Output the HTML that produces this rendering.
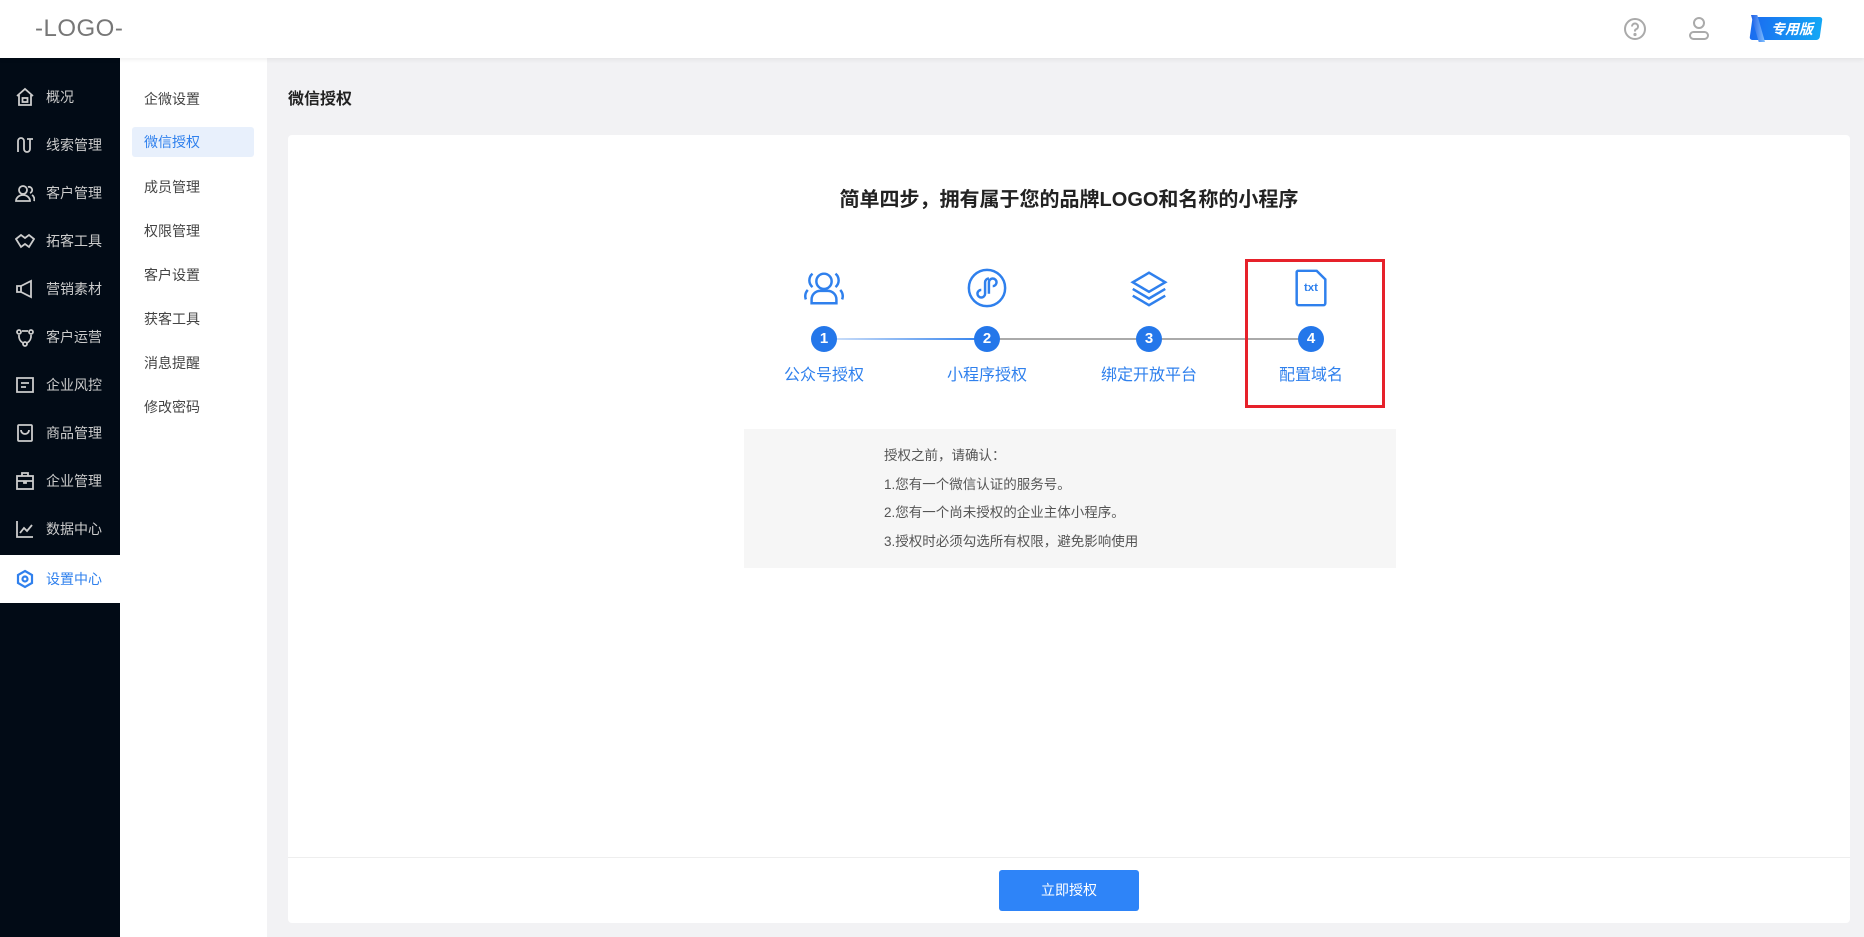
<!DOCTYPE html>
<html><head><meta charset="utf-8">
<style>
*{margin:0;padding:0;box-sizing:border-box}
body{width:1864px;height:937px;overflow:hidden;background:#f2f2f4;font-family:"Liberation Sans","Noto Sans CJK SC",sans-serif;position:relative}
.hdr{position:absolute;left:0;top:0;width:1864px;height:58px;background:#fff;box-shadow:0 2px 4px rgba(0,0,0,.06);z-index:2}
.logo{position:absolute;left:35px;top:15px;font-size:24px;color:#777;letter-spacing:0.5px}
.side{position:absolute;left:0;top:58px;width:120px;height:879px;background:#020b16}
.side .it{position:absolute;left:0;width:120px;height:48px;display:flex;align-items:center;color:#ccc;font-size:14px}
.side .it svg{position:absolute;left:15px;width:20px;height:20px}
.side .it span{position:absolute;left:46px}
.side .act{background:#fff;color:#2f80ed}
.sub{position:absolute;left:120px;top:58px;width:147px;height:879px;background:#fff}
.sub .it{position:absolute;left:24px;font-size:14px;color:#444;height:30px;line-height:30px}
.sub .on{left:12px;width:122px;padding-left:12px;background:#e8f0fc;color:#2f80ed;border-radius:3px}
.title{position:absolute;left:288px;top:85px;font-size:16px;color:#222;font-weight:bold}
.card{position:absolute;left:288px;top:135px;width:1562px;height:788px;background:#fff;border-radius:4px}
.h{position:absolute;left:0;width:100%;top:48px;text-align:center;font-size:20px;font-weight:bold;color:#222}
.circ{position:absolute;width:26px;height:26px;border-radius:50%;background:#2477ea;color:#fff;font-weight:bold;font-size:15px;line-height:26px;text-align:center;margin-left:-13px;top:191px}
.lbl{position:absolute;top:226px;width:160px;margin-left:-80px;text-align:center;color:#2f80ed;font-size:16px}
.ico{position:absolute;top:132px;margin-left:-21px;width:42px;height:42px}
.info{position:absolute;left:456px;top:294px;width:652px;height:139px;background:#f6f6f6;padding:13px 0 0 140px;font-size:13.5px;color:#555;line-height:28.5px}
.foot{position:absolute;left:0;top:722px;width:100%;border-top:1px solid #eee}
.btn{position:absolute;left:711px;top:735px;width:140px;height:41px;background:#2e84f8;color:#fff;font-size:14px;text-align:center;line-height:41px;border-radius:3px}
</style></head><body>
<div class="hdr">
 <div class="logo">-LOGO-</div>
 <svg style="position:absolute;left:1623px;top:17px" width="24" height="24" viewBox="0 0 24 24" fill="none" stroke="#aaa" stroke-width="2"><circle cx="12" cy="12" r="10"/><path d="M9 9.5a3 3 0 1 1 4 2.8c-.7.3-1 .9-1 1.7v.5"/><circle cx="12" cy="17.5" r=".6" fill="#aaa"/></svg>
 <svg style="position:absolute;left:1688px;top:16px" width="22" height="26" viewBox="0 0 22 26" fill="none" stroke="#aaa" stroke-width="2"><circle cx="11" cy="7" r="5"/><rect x="2" y="16" width="18" height="7" rx="3.5"/></svg>
 <div style="position:absolute;left:1751px;top:17px;width:70px;height:23px;background:linear-gradient(90deg,#1a6cf0,#14a7f5);border-radius:3px;transform:skewX(-8deg)"></div>
 <div style="position:absolute;left:1751px;top:15px;width:14px;height:27px;background:linear-gradient(90deg,#1e5fe6,#7fbfff);clip-path:polygon(0 0,45% 0,100% 100%,55% 100%)"></div>
 <div style="position:absolute;left:1771px;top:19px;color:#fff;font-size:14px;font-weight:bold;font-style:italic">专用版</div>
</div>

<div class="side">
 <div class="it" style="top:15px"><svg viewBox="0 0 20 20" fill="none" stroke="#ccc" stroke-width="1.8"><path d="M2 9L10 2l8 7M4 8v10h12V8"/><rect x="7.5" y="11" width="5" height="4"/></svg><span>概况</span></div>
 <div class="it" style="top:63px"><svg viewBox="0 0 20 20" fill="none" stroke="#ccc" stroke-width="1.8"><path d="M3 17V6a3 3 0 0 1 6 0v8a3 3 0 0 0 6 0V4M12 4h6"/></svg><span>线索管理</span></div>
 <div class="it" style="top:111px"><svg viewBox="0 0 20 20" fill="none" stroke="#ccc" stroke-width="1.8"><circle cx="8" cy="7" r="4"/><path d="M1 18a7 6 0 0 1 14 0zM13 4a3 3 0 0 1 2 6M17 12a5 5 0 0 1 2 6"/></svg><span>客户管理</span></div>
 <div class="it" style="top:159px"><svg viewBox="0 0 20 20" fill="none" stroke="#ccc" stroke-width="1.8"><path d="M1 8l5-4 4 3 4-3 5 4-5 8-4-3-4 3z"/></svg><span>拓客工具</span></div>
 <div class="it" style="top:207px"><svg viewBox="0 0 20 20" fill="none" stroke="#ccc" stroke-width="1.8"><path d="M2 7h4l10-5v16L6 13H2zM6 7v6"/></svg><span>营销素材</span></div>
 <div class="it" style="top:255px"><svg viewBox="0 0 20 20" fill="none" stroke="#ccc" stroke-width="1.8"><circle cx="4" cy="5" r="2"/><circle cx="16" cy="5" r="2"/><circle cx="10" cy="17" r="2"/><path d="M4 8a8 8 0 0 0 4 8M16 8a8 8 0 0 1-4 8M7 4h6"/></svg><span>客户运营</span></div>
 <div class="it" style="top:303px"><svg viewBox="0 0 20 20" fill="none" stroke="#ccc" stroke-width="1.8"><path d="M2 3h16v14H2zM6 8h8M6 12h5"/></svg><span>企业风控</span></div>
 <div class="it" style="top:351px"><svg viewBox="0 0 20 20" fill="none" stroke="#ccc" stroke-width="1.8"><rect x="3" y="2" width="14" height="16" rx="1"/><path d="M6 7a4 4 0 0 0 8 0"/></svg><span>商品管理</span></div>
 <div class="it" style="top:399px"><svg viewBox="0 0 20 20" fill="none" stroke="#ccc" stroke-width="1.8"><rect x="2" y="5" width="16" height="13"/><path d="M7 5V2h6v3M2 10h16M9 10h2v2H9z"/></svg><span>企业管理</span></div>
 <div class="it" style="top:447px"><svg viewBox="0 0 20 20" fill="none" stroke="#ccc" stroke-width="1.8"><path d="M2 2v16h16M5 14l4-5 3 3 5-6"/></svg><span>数据中心</span></div>
 <div class="it act" style="top:497px"><svg viewBox="0 0 20 20" fill="none" stroke="#2f80ed" stroke-width="2.2"><path d="M10 2l7 4v8l-7 4-7-4V6z"/><circle cx="10" cy="10" r="2.5"/></svg><span>设置中心</span></div>
</div>

<div class="sub">
 <div class="it" style="top:26px">企微设置</div>
 <div class="it on" style="top:69px">微信授权</div>
 <div class="it" style="top:114px">成员管理</div>
 <div class="it" style="top:158px">权限管理</div>
 <div class="it" style="top:202px">客户设置</div>
 <div class="it" style="top:246px">获客工具</div>
 <div class="it" style="top:290px">消息提醒</div>
 <div class="it" style="top:334px">修改密码</div>
</div>

<div class="title">微信授权</div>
<div class="card">
 <div class="h">简单四步，拥有属于您的品牌LOGO和名称的小程序</div>
 <div style="position:absolute;left:536px;top:203px;width:163px;height:2px;background:linear-gradient(90deg,#d5e4fa,#2f80ed)"></div>
 <div style="position:absolute;left:699px;top:203px;width:325px;height:2px;background:#aaa"></div>
 <svg class="ico" style="left:536px" viewBox="0 0 44 44" fill="none" stroke="#2f80ed" stroke-width="2.6"><circle cx="22" cy="15" r="8"/><path d="M9 38v-4a9 9 0 0 1 9-9h8a9 9 0 0 1 9 9v4zM10 7a9 9 0 0 0 0 14M34 7a9 9 0 0 1 0 14M5 24a10 10 0 0 0-2 10M39 24a10 10 0 0 1 2 10"/></svg>
 <svg class="ico" style="left:699px" viewBox="0 0 44 44" fill="none" stroke="#2f80ed" stroke-width="2.6"><circle cx="22" cy="22" r="19"/><path d="M20 24v4a4 4 0 1 1-4-4M24 20v-4a4 4 0 1 1 4 4M20 28V16a4 4 0 0 1 4-4M24 16v12"/></svg>
 <svg class="ico" style="left:861px" viewBox="0 0 44 44" fill="none" stroke="#2f80ed" stroke-width="2.6"><path d="M22 6l17 10-17 10L5 16zM5 23l17 10 17-10M5 30l17 10 17-10"/></svg>
 <svg class="ico" style="left:1023px" viewBox="0 0 44 44" fill="none" stroke="#2f80ed" stroke-width="2.6"><path d="M8 4h20l9 9v25a2 2 0 0 1-2 2H9a2 2 0 0 1-2-2V6a2 2 0 0 1 1-2z"/><text x="22" y="25" text-anchor="middle" font-size="12" font-weight="bold" fill="#2f80ed" stroke="none" font-family="Liberation Sans,sans-serif">txt</text></svg>
 <div class="circ" style="left:536px">1</div>
 <div class="circ" style="left:699px">2</div>
 <div class="circ" style="left:861px">3</div>
 <div class="circ" style="left:1023px">4</div>
 <div class="lbl" style="left:536px">公众号授权</div>
 <div class="lbl" style="left:699px">小程序授权</div>
 <div class="lbl" style="left:861px">绑定开放平台</div>
 <div class="lbl" style="left:1023px">配置域名</div>
 <div style="position:absolute;left:957px;top:124px;width:140px;height:149px;border:3px solid #e6212a"></div>
 <div class="info">授权之前，请确认：<br>1.您有一个微信认证的服务号。<br>2.您有一个尚未授权的企业主体小程序。<br>3.授权时必须勾选所有权限，避免影响使用</div>
 <div class="foot"></div>
 <div class="btn">立即授权</div>
</div>
</body></html>
